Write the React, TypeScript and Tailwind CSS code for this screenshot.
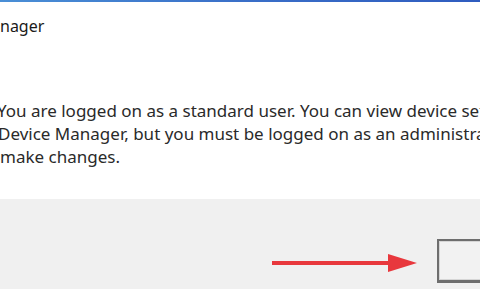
export default function App() {
  const font = { fontFamily: '"Noto Sans", "Open Sans", sans-serif' };
  return (
    <div className="w-[480px] h-[300px] overflow-hidden bg-white relative" style={font}>
      <div className="h-[2px] bg-gradient-to-r from-[#4a8fd6] via-[#3a6fc8] to-[#2f5cbf]" />
      <div className="pl-0 pt-[14px] text-[16px] leading-[20px] text-[#1a1a1a]">nager</div>
      <div className="ml-[-3px] mt-[63px] text-[17px] leading-[23px] text-[#2a2a2a] whitespace-nowrap">
        <div>You are logged on as a standard user. You can view device settings in</div>
        <div className="pl-[1px]">Device Manager, but you must be logged on as an administrator to</div>
        <div className="pl-[3px]">make changes.</div>
      </div>
      <div className="mt-[31px] h-[90px] bg-[#f0f0f0] flex items-center justify-end">
        <div className="flex items-center mr-[60px] mt-[38px]">
          <svg width="150" height="22" viewBox="0 0 150 22">
            <line x1="2" y1="11" x2="125" y2="11" stroke="#e8383d" strokeWidth="4" />
            <polygon points="118,2 147,11 118,20" fill="#e8383d" />
          </svg>
        </div>
        <div className="absolute left-[437px] top-[239px] w-[60px] h-[44px] border-2 border-b-[3px] border-[#6e6e6e] bg-[#f2f2f2]">
          <div className="w-full h-full border border-[#d6d6d6]" />
        </div>
      </div>
    </div>
  );
}
